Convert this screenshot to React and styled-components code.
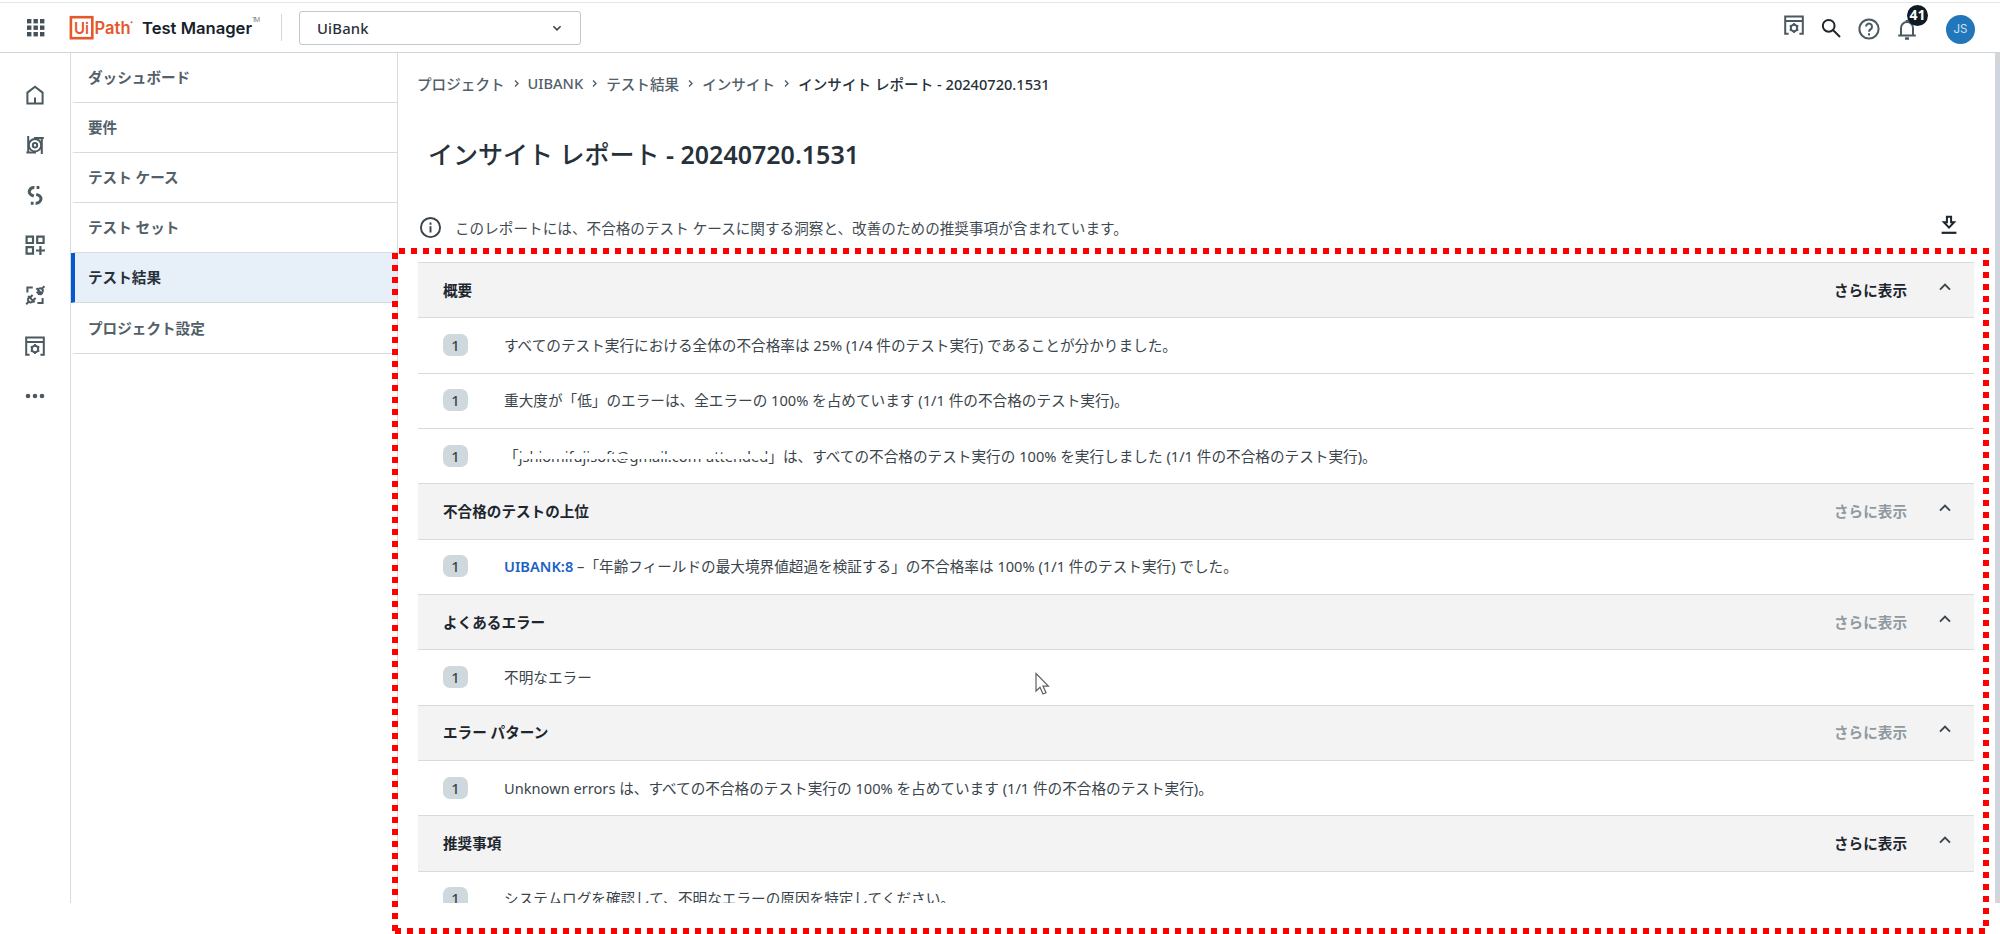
import styled, { createGlobalStyle, css } from "styled-components";

const GlobalStyle = createGlobalStyle`
  * {
    box-sizing: border-box;
  }
  body {
    margin: 0;
    background: #fff;
    font-family: "Noto Sans", "Noto Sans CJK JP", sans-serif;
    font-size: 14.6px;
    color: #273139;
    overflow: hidden;
  }
`;

const Page = styled.div`
  position: relative;
  width: 2000px;
  height: 934px;
  overflow: hidden;
`;

const Shell = styled.div`
  display: flex;
  flex-direction: column;
  height: 903px;
  overflow: hidden;
`;

const Header = styled.header`
  display: flex;
  align-items: center;
  flex: none;
  height: 51px;
  margin-top: 2px;
  padding: 0 25px 0 27px;
  border-top: 1px solid #e3e5e6;
  border-bottom: 1px solid #cfd6d9;
`;

const Logo = styled.svg`
  margin-left: 24px;
  overflow: visible;
`;

const Separator = styled.div`
  width: 1px;
  height: 27px;
  margin: 0 17px 0 20px;
  background: #d3d8db;
`;

const Select = styled.div`
  display: flex;
  align-items: center;
  justify-content: space-between;
  width: 282px;
  height: 34px;
  padding: 0 17px;
  border: 1.5px solid #c2c7ca;
  border-radius: 3px;
  color: #273139;
  font-weight: 500;
  font-size: 14.8px;
  letter-spacing: 0.2px;
`;

const Actions = styled.div`
  display: flex;
  align-items: center;
  margin-left: auto;
`;

const Action = styled.div`
  display: flex;
  position: relative;
  margin-left: ${({ $gap }) => $gap}px;
  margin-top: ${({ $top }) => $top || 0}px;
`;

const Count = styled.span`
  position: absolute;
  top: -12px;
  left: 12px;
  width: 21px;
  height: 21px;
  border-radius: 50%;
  background: #0f1a22;
  color: #fff;
  font-size: 14px;
  font-weight: 700;
  line-height: 20px;
  text-align: center;
`;

const Avatar = styled.div`
  width: 29px;
  height: 29px;
  margin-left: 27px;
  margin-top: 3px;
  border-radius: 50%;
  background: #2277bb;
  color: #c9e0f2;
  font-family: Inter, sans-serif;
  font-size: 11.5px;
  line-height: 29px;
  text-align: center;
`;

const Body = styled.div`
  display: flex;
  flex: 1;
  min-height: 0;
`;

const Rail = styled.nav`
  display: flex;
  flex-direction: column;
  align-items: center;
  flex: none;
  width: 71px;
  padding-top: 17px;
  border-right: 1px solid #d5dbde;
`;

const RailItem = styled.div`
  display: flex;
  align-items: center;
  justify-content: center;
  width: 50px;
  height: 50.1px;
`;

const Menu = styled.nav`
  flex: none;
  width: 327px;
  border-right: 1px solid #d5dbde;
`;

const MenuItem = styled.div`
  display: flex;
  align-items: center;
  height: 50.1px;
  padding: 0 0 2px 13px;
  border-left: 4px solid transparent;
  border-bottom: 1px solid #d5dbde;
  color: #526069;
  font-weight: 600;

  ${({ $active }) =>
    $active &&
    css`
      background: #e7eff9;
      border-left-color: #0559ce;
      color: #273139;
    `}
`;

const Main = styled.main`
  flex: 1;
  min-width: 0;
  padding: 18px 21px 0 20px;
`;

const Breadcrumb = styled.div`
  display: flex;
  align-items: center;
  height: 24px;
  margin-left: -1px;
  color: #526069;
  font-weight: 500;
`;

const Crumb = styled.span`
  color: ${({ $current }) => ($current ? "#273139" : "inherit")};
`;

const CrumbArrow = styled.svg`
  width: 23px;
`;

const Title = styled.h1`
  height: 36px;
  margin: 41px 0 0 10px;
  font-size: 25px;
  font-weight: 500;
  line-height: 36px;
`;

const ReportId = styled.span`
  font-weight: 600;
`;

const Notice = styled.div`
  display: flex;
  align-items: center;
  height: 24px;
  margin-top: 43px;
  padding: 0 17px 0 1px;
  color: #3f4a52;
`;

const NoticeText = styled.span`
  flex: 1;
  padding-left: 13px;
  letter-spacing: 0.02px;
`;

const Table = styled.div`
  margin-top: 23px;
  border-top: 1px solid #d8dbdd;
`;

const SectionHead = styled.div`
  display: flex;
  align-items: center;
  height: 55.33px;
  padding: 0 23px 2px 25px;
  border-bottom: 1px solid #d8dbdd;
  background: #f3f3f4;
  color: #1d262d;
  font-weight: 600;
`;

const More = styled.span`
  margin-left: auto;
  margin-right: 32px;
  color: ${({ $muted }) => ($muted ? "#8f999f" : "#1d262d")};
`;

const Row = styled.div`
  display: flex;
  align-items: center;
  height: 55.33px;
  padding: 0 25px 1px;
  border-bottom: 1px solid #d8dbdd;
  color: #3a444b;
  font-size: 14.63px;
  white-space: pre;
`;

const RowText = styled.span`
  padding-bottom: 1px;
`;

const Badge = styled.span`
  width: 25px;
  height: 22px;
  margin-right: 36px;
  border-radius: 7px;
  background: #cfd8dd;
  color: #3a444b;
  font-weight: 500;
  line-height: 22px;
  text-align: center;
`;

const Link = styled.a`
  color: #1c62c4;
  font-weight: 600;
`;

// the account name has a white strip through its middle
const Masked = styled.span`
  background: none;
  text-decoration: line-through;
  text-decoration-color: #fff;
  text-decoration-thickness: 5px;
  text-decoration-skip-ink: none;
`;

const Scrollbar = styled.div`
  flex: none;
  width: 5px;
  background: #cfd6de;
  border-top: 7px solid #d6d6d6;
  border-bottom: 6px solid #d6d6d4;
`;

const Overlay = styled.svg`
  position: absolute;
  top: 0;
  left: 0;
  pointer-events: none;
`;

const Icon = ({ size = 24, color = "#4b5961", width = 2, children }) => (
  <svg
    width={size}
    height={size}
    viewBox="0 0 24 24"
    fill="none"
    stroke={color}
    strokeWidth={width}
  >
    {children}
  </svg>
);

const AppsIcon = () => (
  <svg width="18" height="18" viewBox="0 0 18 18" fill="#445058">
    {[0, 6.5, 13].map((y) =>
      [0, 6.5, 13].map((x) => (
        <rect key={`${x}-${y}`} x={x} y={y} width="4.4" height="4.4" />
      ))
    )}
  </svg>
);

const HomeIcon = () => (
  <Icon>
    <path d="M4.4 20.6V9.6L12 3.8l7.6 5.8v11z" />
    <path d="M12 14.5v6" />
  </Icon>
);

const DiscoverIcon = () => (
  <Icon width={2}>
    <path d="M5.2 3v17M3.4 19.4H13M18.8 21V5M20.8 5H11" />
    <circle cx="12" cy="12.2" r="6.2" />
    <circle cx="12" cy="12.2" r="2.2" />
  </Icon>
);

const FlowIcon = () => (
  <Icon width={3}>
    <path d="M11.4 4.4A4.8 4.8 0 0 0 6.2 8.8c0 2.6 2 3.4 4.6 4.2" />
    <path d="M12.6 20.2a4.8 4.8 0 0 0 5.4-4.4c0-2.6-2-3.6-4.8-4.4" />
    <path d="M13.6 4.5h2.8M7.8 20.2h2.8" />
  </Icon>
);

const WidgetsIcon = () => (
  <Icon width={2.2}>
    <path d="M3.6 3.6h6.4V10H3.6zM14.2 3.6h6.4V10h-6.4zM3.6 14.2h6.4v6.4H3.6zM17.4 13v9M13 17.5h9" />
  </Icon>
);

const IntegrationIcon = () => (
  <Icon width={2}>
    <path d="M4.4 9.4V4.4h5.4M14.4 20h5.2v-5" />
    <path d="M13.4 5.2l6 6M15 6.6c1.8-2.4 5.2-1 4.8 1.6-.2 1.4-1.2 1.8-1.6 2.2M19 5.6l2.4-2.4M14.6 10.8l1.8-1.8M13.8 8.6l2 2.4 2.6.2" />
    <path d="M5.2 13l6.4 6.4M6.2 14c-2.4 2.2-1.2 5 1 5.4 1.6.2 2.6-.8 3.2-1.4M5.4 19l-2.2 2.2M7.6 14l2-2M10.6 17l2-2" />
  </Icon>
);

const WindowGearIcon = () => (
  <Icon>
    <path d="M6.6 20.8H3.2V3.4h17.6v17.4h-3.4M3.2 8h17.6" />
    <circle cx="12" cy="15" r="3.2" />
    <path
      strokeWidth="1.8"
      d="M12 10v2M12 18v2M7.8 12.5l1.6 1M14.6 16.5l1.7 1M7.8 17.5l1.6-1M14.6 13.5l1.7-1"
    />
  </Icon>
);

const DotsIcon = () => (
  <svg width="20" height="6" viewBox="0 0 20 6" fill="#4b5961">
    <circle cx="3" cy="3" r="2.3" />
    <circle cx="10" cy="3" r="2.3" />
    <circle cx="17" cy="3" r="2.3" />
  </svg>
);

const SearchIcon = () => (
  <Icon color="#1d262d" width={2}>
    <circle cx="9.7" cy="9.8" r="5.9" />
    <path d="M14 14l7 7" />
  </Icon>
);

const HelpIcon = () => (
  <Icon width={2}>
    <circle cx="12" cy="12" r="9.6" />
    <path d="M9 9.6a3 3 0 1 1 4.7 2.5c-1.1.8-1.7 1.3-1.7 2.6M12 16.2v2.2" />
  </Icon>
);

const BellIcon = () => (
  <Icon width={2}>
    <path d="M6 18.4V11a6 6 0 0 1 12 0v7.4M3.2 18.4h17.6" />
    <path strokeWidth="2.6" d="M10 21.5h4M12 3v2" />
  </Icon>
);

const InfoIcon = () => (
  <Icon size={23} color="#3a444b" width={2}>
    <circle cx="12" cy="12" r="10" />
    <path d="M12 10.8v6.4M12 6.8v2.2" />
  </Icon>
);

const DownloadIcon = () => (
  <svg width="16" height="24" viewBox="0 0 16 24" fill="none" stroke="#1d262d">
    <path
      strokeWidth="2"
      d="M5.9 1.8h4.2v5.4h3L8 12.6 2.9 7.2h3z"
    />
    <path strokeWidth="2.2" d="M.6 17.8h14.8" />
  </svg>
);

const Chevron = ({ up }) => (
  <svg width="12" height="12" viewBox="0 0 12 12" fill="none">
    <path
      d={up ? "M1 8.6l5-5 5 5" : "M2.4 4.2L6 7.8l3.6-3.6"}
      stroke="#3a444b"
      strokeWidth={up ? 1.9 : 1.6}
    />
  </svg>
);

const UpChevron = styled.span`
  display: flex;
  margin-top: -5px;
`;

const railIcons = [
  HomeIcon,
  DiscoverIcon,
  FlowIcon,
  WidgetsIcon,
  IntegrationIcon,
  WindowGearIcon,
  DotsIcon,
];

const menu = [
  "ダッシュボード",
  "要件",
  "テスト ケース",
  "テスト セット",
  "テスト結果",
  "プロジェクト設定",
];

const crumbs = [
  "プロジェクト",
  "UIBANK",
  "テスト結果",
  "インサイト",
  "インサイト レポート - 20240720.1531",
];

const sections = [
  {
    title: "概要",
    more: true,
    rows: [
      "すべてのテスト実行における全体の不合格率は 25% (1/4 件のテスト実行) であることが分かりました。",
      "重大度が「低」のエラーは、全エラーの 100% を占めています (1/1 件の不合格のテスト実行)。",
      <>
        「<Masked>jshiomifujisoft@gmail.com-attended</Masked>
        」は、すべての不合格のテスト実行の 100% を実行しました (1/1 件の不合格のテスト実行)。
      </>,
    ],
  },
  {
    title: "不合格のテストの上位",
    rows: [
      <>
        <Link>UIBANK:8</Link>
        {" –「年齢フィールドの最大境界値超過を検証する」の不合格率は 100% (1/1 件のテスト実行) でした。"}
      </>,
    ],
  },
  { title: "よくあるエラー", rows: ["不明なエラー"] },
  {
    title: "エラー パターン",
    rows: [
      "Unknown errors は、すべての不合格のテスト実行の 100% を占めています (1/1 件の不合格のテスト実行)。",
    ],
  },
  {
    title: "推奨事項",
    more: true,
    rows: ["システムログを確認して、不明なエラーの原因を特定してください。"],
  },
];

const Section = ({ title, more, rows }) => (
  <>
    <SectionHead>
      <span>{title}</span>
      <More $muted={!more}>さらに表示</More>
      <UpChevron>
        <Chevron up />
      </UpChevron>
    </SectionHead>
    {rows.map((row, i) => (
      <Row key={i}>
        <Badge>1</Badge>
        <RowText>{row}</RowText>
      </Row>
    ))}
  </>
);

const TopBar = () => (
  <Header>
    <AppsIcon />
    <Logo width="192" height="26" viewBox="0 0 192 26">
      <rect x="1.9" y="2.2" width="21.4" height="21" fill="none" stroke="#e4582c" strokeWidth="2.6" />
      <g fontFamily="Inter, sans-serif">
        <text x="5" y="18.6" fontSize="16" fontWeight="600" fill="#e4582c" textLength="15" lengthAdjust="spacingAndGlyphs">Ui</text>
        <text x="25.6" y="18.8" fontSize="17" fontWeight="600" fill="#e4582c" textLength="36" lengthAdjust="spacingAndGlyphs">Path</text>
        <circle cx="62.5" cy="7.2" r="1" fill="#e4582c" />
        <text x="73" y="18.8" fontSize="16.5" fontWeight="600" fill="#16222b" textLength="110" lengthAdjust="spacingAndGlyphs">Test Manager</text>
        <text x="183" y="7" fontSize="6.5" fill="#7c868c" textLength="8">TM</text>
      </g>
    </Logo>
    <Separator />
    <Select>
      UiBank
      <Chevron />
    </Select>
    <Actions>
      <Action $top={-6}>
        <WindowGearIcon />
      </Action>
      <Action $gap={13} $top={1}>
        <SearchIcon />
      </Action>
      <Action $gap={14} $top={3}>
        <HelpIcon />
      </Action>
      <Action $gap={14} $top={3}>
        <BellIcon />
        <Count>41</Count>
      </Action>
      <Avatar>JS</Avatar>
    </Actions>
  </Header>
);

export default function App() {
  return (
    <Page>
      <GlobalStyle />
      <Shell>
        <TopBar />
        <Body>
          <Rail>
            {railIcons.map((RailIcon, i) => (
              <RailItem key={i}>
                <RailIcon />
              </RailItem>
            ))}
          </Rail>
          <Menu>
            {menu.map((label) => (
              <MenuItem key={label} $active={label === "テスト結果"}>
                {label}
              </MenuItem>
            ))}
          </Menu>
          <Main>
            <Breadcrumb>
              {crumbs.map((crumb, i) => [
                i > 0 && (
                  <CrumbArrow key={`arrow-${i}`} height="10" viewBox="0 0 23 10">
                    <path d="M10 2.5L13 5.5 10 8.5" fill="none" stroke="#526069" strokeWidth="1.4" />
                  </CrumbArrow>
                ),
                <Crumb key={i} $current={i === crumbs.length - 1}>
                  {crumb}
                </Crumb>,
              ])}
            </Breadcrumb>
            <Title>
              インサイト レポート <ReportId>- 20240720.1531</ReportId>
            </Title>
            <Notice>
              <InfoIcon />
              <NoticeText>
                このレポートには、不合格のテスト ケースに関する洞察と、改善のための推奨事項が含まれています。
              </NoticeText>
              <DownloadIcon />
            </Notice>
            <Table>
              {sections.map((section) => (
                <Section key={section.title} {...section} />
              ))}
            </Table>
          </Main>
          <Scrollbar />
        </Body>
      </Shell>
      <Overlay width="2000" height="934">
        <g stroke="#f00" strokeWidth="6" strokeDasharray="6 6">
          <path d="M399 251H1989" />
          <path d="M1986 260V926" />
          <path d="M395 931H1985" />
          <path d="M395 253V931" />
        </g>
        <path
          d="M1036 673.5v17.5l4-3.8 3 6.8 3-1.3-3-6.6h5.4z"
          fill="#fff"
          stroke="#5b6064"
          strokeWidth="1.2"
        />
      </Overlay>
    </Page>
  );
}
